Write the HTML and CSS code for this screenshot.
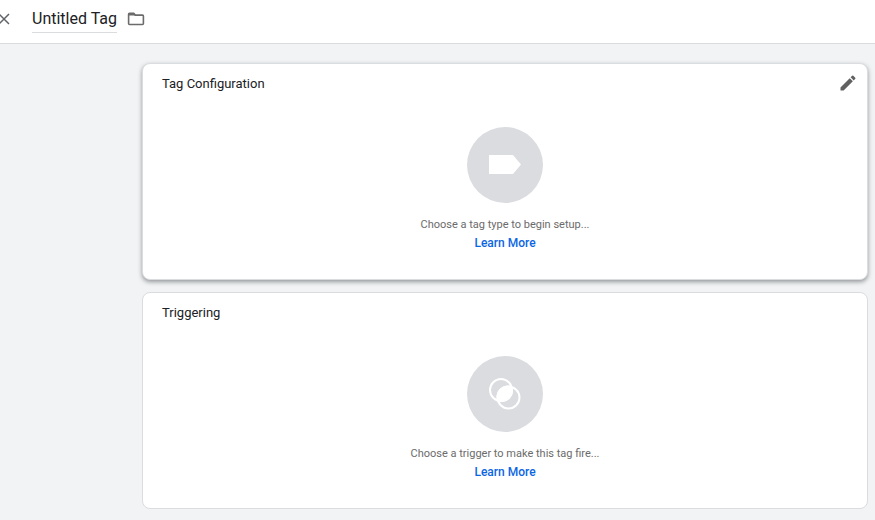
FILE: index.html
```
<!DOCTYPE html>
<html lang="en">

<head>
    <meta charset="UTF-8">
    <meta name="viewport" content="width=device-width, initial-scale=1.0">
    <title>Untitled Tag</title>
    <link rel="stylesheet" href="styles.css">
</head>

<body>
    <header class="header">
        <button type="button" class="icon-button close" aria-label="Close">
            <svg width="12" height="12" viewBox="0 0 12 12">
                <path d="M1 1l10 10M11 1L1 11" fill="none" stroke="#5f6368" stroke-width="1.5"/>
            </svg>
        </button>
        <input type="text" class="tag-name" value="Untitled Tag" aria-label="Tag name">
        <button type="button" class="icon-button" aria-label="Choose folder">
            <svg width="18" height="14" viewBox="0 0 18 14">
                <path d="M2.5 1.4h4.2l1.6 1.7h7.2q.9 0 .9.9v7.6q0 .9-.9.9h-13q-.9 0-.9-.9V2.3q0-.9.9-.9z" fill="none" stroke="#6b6b6b" stroke-width="1.6"/>
                <path d="M2 1h5l1.7 2.5H2z" fill="#6b6b6b"/>
            </svg>
        </button>
    </header>

    <main class="content">
        <section class="card card-active">
            <div class="card-header">
                <h2>Tag Configuration</h2>
                <button type="button" class="icon-button" aria-label="Edit tag configuration">
                    <svg width="20" height="20" viewBox="0 0 24 24">
                        <path d="M3 17.25V21h3.75L17.81 9.94l-3.75-3.75L3 17.25zM20.71 7.04a1 1 0 0 0 0-1.41l-2.34-2.34a1 1 0 0 0-1.41 0l-1.83 1.83 3.75 3.75 1.83-1.83z" fill="#616161"/>
                    </svg>
                </button>
            </div>
            <div class="placeholder">
                <div class="circle">
                    <svg width="32" height="20" viewBox="0 0 32 20">
                        <path d="M0 0h24l8 9.500-8 9.500H0z" fill="#fff"/>
                    </svg>
                </div>
                <p>Choose a tag type to begin setup...</p>
                <a href="#">Learn More</a>
            </div>
        </section>

        <section class="card">
            <div class="card-header">
                <h2>Triggering</h2>
            </div>
            <div class="placeholder">
                <div class="circle">
                    <svg width="32" height="32" viewBox="0 0 32 32">
                        <g fill="none" stroke="#fff" stroke-width="2">
                            <circle cx="12" cy="12" r="11"/>
                            <circle cx="19.500" cy="19.500" r="11"/>
                        </g>
                        <path d="M8.500 23A11 11 0 0 1 23 8.500A11 11 0 0 1 8.500 23z" fill="#fff"/>
                    </svg>
                </div>
                <p>Choose a trigger to make this tag fire...</p>
                <a href="#">Learn More</a>
            </div>
        </section>
    </main>
</body>

</html>
```
FILE: styles.css
```
* {
    box-sizing: border-box;
}

body {
    margin: 0;
    min-height: 100vh;
    background-color: #f1f3f4;
    font-family: Roboto, Arial, sans-serif;
    color: #202124;
}

.header {
    display: flex;
    align-items: center;
    height: 44px;
    padding-bottom: 5px;
    background-color: #fff;
    border-bottom: 1px solid #dadce0;
}

.icon-button {
    display: flex;
    padding: 0;
    border: none;
    background: none;
    cursor: pointer;
}

.close {
    margin-left: -2px;
    margin-right: 22px;
}

.tag-name {
    width: 85px;
    height: 28px;
    margin-right: 10px;
    padding: 0;
    border: none;
    border-bottom: 1px solid #dadce0;
    font-family: inherit;
    font-size: 16px;
    color: #202124;
}

.content {
    display: flex;
    flex-direction: column;
    gap: 12px;
    padding: 19px 7px 11px 142px;
}

.card {
    padding-bottom: 26px;
    background-color: #fff;
    border: 1px solid #dadce0;
    border-radius: 8px;
}

.card-active {
    box-shadow: 0 2px 4px rgba(60, 64, 67, 0.5);
}

.card-header {
    display: flex;
    align-items: center;
    justify-content: space-between;
    height: 38px;
    padding: 0 9px 0 19px;
}

h2 {
    margin: 0;
    font-size: 13px;
    font-weight: 400;
}

.placeholder {
    display: flex;
    flex-direction: column;
    align-items: center;
    padding-top: 25px;
    font-size: 11px;
    line-height: 19px;
}

.circle {
    display: flex;
    align-items: center;
    justify-content: center;
    width: 76px;
    height: 76px;
    margin-bottom: 12px;
    border-radius: 50%;
    background-color: #dadce0;
}

p {
    margin: 0;
    color: #6b6b6b;
}

a {
    color: #0b66e4;
    font-size: 12px;
    font-weight: 500;
    text-decoration: none;
}
```
